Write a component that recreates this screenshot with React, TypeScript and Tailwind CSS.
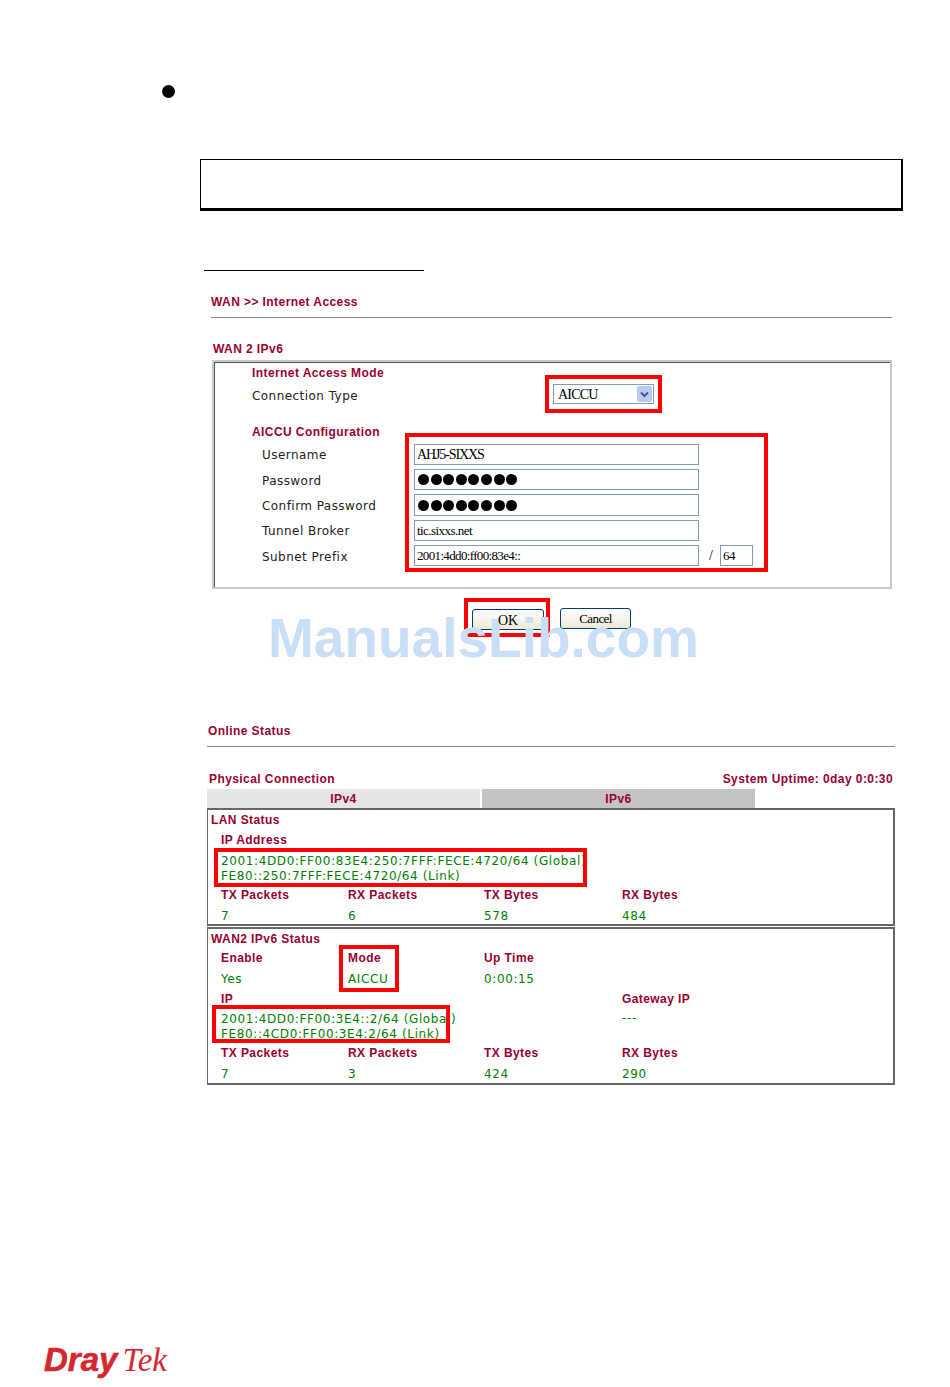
import type { ReactNode } from "react";

const sans = "font-['Liberation_Sans',Arial,sans-serif]";
const plain = "font-['DejaVu_Sans',Verdana,sans-serif]";
const serif = "font-['Liberation_Serif','Times_New_Roman',serif]";

function Heading({ children, className = "" }: { children: ReactNode; className?: string }) {
    return (
        <div className={`flex h-[14px] items-center whitespace-nowrap text-[12px] font-bold tracking-[0.42px] text-[#990033] ${sans} ${className}`}>
            {children}
        </div>
    );
}

function Label({ children, className = "" }: { children: ReactNode; className?: string }) {
    return (
        <div className={`flex h-[14px] items-center whitespace-nowrap pt-[2px] text-[12px] tracking-[0.45px] text-[#222] ${plain} ${className}`}>
            {children}
        </div>
    );
}

function Value({ children, className = "" }: { children: ReactNode; className?: string }) {
    return (
        <div className={`flex items-center whitespace-nowrap pt-[2px] text-[12px] tracking-[0.62px] text-[#008000] ${plain} ${className}`}>
            {children}
        </div>
    );
}

function Field({ children, className = "h-[21px] w-[285px]" }: { children: ReactNode; className?: string }) {
    return (
        <div className={`flex items-center border border-[#7f9db9] bg-white pl-[2px] text-[14px] text-black ${serif} ${className}`}>
            {children}
        </div>
    );
}

function Dots() {
    return (
        <div className="flex gap-[1.6px] pl-px">
            {[0, 1, 2, 3, 4, 5, 6, 7].map((i) => (
                <span key={i} className="h-[11px] w-[11px] rounded-full bg-black" />
            ))}
        </div>
    );
}

// red marker painted over its content, the text runs under it in the picture
function Marker({ children, className = "" }: { children: ReactNode; className?: string }) {
    return (
        <div className={`relative ${className}`}>
            {children}
            <div className="absolute inset-0 border-[4px] border-[#ff0000]" />
        </div>
    );
}

function Counters({ tx, rx, txBytes, rxBytes, first = "h-[16px]", second = "mt-[2px] h-[20px]" }: { tx: string; rx: string; txBytes: string; rxBytes: string; first?: string; second?: string }) {
    const cols = "grid grid-cols-[127px_136px_138px_1fr] pl-[13px]";
    return (
        <>
            <div className={cols}>
                <Heading className={first}>TX Packets</Heading>
                <Heading className={first}>RX Packets</Heading>
                <Heading className={first}>TX Bytes</Heading>
                <Heading className={first}>RX Bytes</Heading>
            </div>
            <div className={cols}>
                <Value className={second}>{tx}</Value>
                <Value className={second}>{rx}</Value>
                <Value className={second}>{txBytes}</Value>
                <Value className={second}>{rxBytes}</Value>
            </div>
        </>
    );
}

export default function App() {
    return (
        <div className={`relative flex h-[1387px] w-[950px] flex-col overflow-hidden bg-white ${sans}`}>
            {/* Bullet, note box and rule */}
            <div className="ml-[162px] mt-[85px] h-[13px] w-[13px] rounded-full bg-black" />
            <div className="ml-[200px] mt-[61px] h-[52px] w-[703px] border-b-[3px] border-l-[1.5px] border-r-[2px] border-t-[1.5px] border-black" />
            <div className="ml-[204px] mt-[59px] h-px w-[220px] bg-black" />

            {/* WAN form */}
            <Heading className="ml-[211px] mt-[24px]">WAN &gt;&gt; Internet Access</Heading>
            <div className="ml-[211px] mt-[8px] h-px w-[681px] bg-[#808080]" />
            <Heading className="ml-[213px] mt-[24px]">WAN 2 IPv6</Heading>

            <div className="ml-[212px] mt-[4px] h-[229px] w-[680px] border-2 border-[#c8c8c8]">
                <div className="flex h-full border-l border-t border-[#555]">
                    <div className="ml-[37px] w-[153px] shrink-0">
                        <Heading className="mt-[3px]">Internet Access Mode</Heading>
                        <Label className="mt-[8px]">Connection Type</Label>
                        <Heading className="mt-[23px]">AICCU Configuration</Heading>
                        <Label className="ml-[10px] mt-[8px]">Username</Label>
                        <Label className="ml-[10px] mt-[12px]">Password</Label>
                        <Label className="ml-[10px] mt-[11px]">Confirm Password</Label>
                        <Label className="ml-[10px] mt-[11px]">Tunnel Broker</Label>
                        <Label className="ml-[10px] mt-[12px]">Subnet Prefix</Label>
                    </div>
                    <div>
                        <div className="ml-[140px] mt-[12px] flex h-[38px] w-[117px] items-center border-[4px] border-[#ff0000] pl-[4px]">
                            <div className={`flex h-[20px] w-[101px] items-center justify-between border border-[#7f9db9] pl-[4px] pr-px text-[14px] tracking-[-0.8px] text-black ${serif}`}>
                                AICCU
                                <span className="flex h-[16px] w-[15px] items-center justify-center rounded-[2px] bg-[#b8cbf5]">
                                    <svg width="9" height="7" viewBox="0 0 9 7" fill="none">
                                        <path d="M1 1.5 L4.5 5 L8 1.5" stroke="#4d6185" strokeWidth="2.2" />
                                    </svg>
                                </span>
                            </div>
                        </div>
                        <div className="mt-[20px] flex h-[139px] w-[363px] flex-col gap-[4px] border-[4px] border-[#ff0000] pl-[5px] pt-[7px]">
                            <Field><span className="tracking-[-1.1px]">AHJ5-SIXXS</span></Field>
                            <Field><Dots /></Field>
                            <Field className="h-[22px] w-[285px]"><Dots /></Field>
                            <Field><span className="text-[13px] tracking-[-0.55px]">tic.sixxs.net</span></Field>
                            <div className="flex items-center">
                                <Field><span className="text-[13px] tracking-[-0.65px]">2001:4dd0:ff00:83e4::</span></Field>
                                <span className={`ml-[10px] w-[11px] text-[14px] text-black ${serif}`}>/</span>
                                <Field className="h-[21px] w-[33px]"><span className="text-[13px] tracking-[-0.6px]">64</span></Field>
                            </div>
                        </div>
                    </div>
                </div>
            </div>

            {/* Buttons */}
            <div className="ml-[464px] mt-[9px] flex h-[39px]">
                <div className="h-[39px] w-[86px] border-[4px] border-[#ff0000] pl-[4px] pt-[6px]">
                    <button className={`h-[21px] w-[72px] rounded-[3px] border border-[#003c74] bg-gradient-to-b from-white to-[#ece9d8] text-[14px] text-black ${serif}`}>
                        <span className="relative z-10">OK</span>
                    </button>
                </div>
                <button className={`ml-[10px] mt-[10px] h-[21px] w-[71px] rounded-[3px] border border-[#003c74] bg-gradient-to-b from-white to-[#ece9d8] text-[13px] tracking-[-0.6px] text-black ${serif}`}>
                    <span className="relative z-10">Cancel</span>
                </button>
            </div>

            {/* Online status */}
            <Heading className="ml-[208px] mt-[87px]">Online Status</Heading>
            <div className="ml-[207px] mt-[8px] h-px w-[688px] bg-[#808080]" />
            <div className="ml-[209px] mt-[25px] flex w-[684px] justify-between">
                <Heading>Physical Connection</Heading>
                <Heading>System Uptime: 0day 0:0:30</Heading>
            </div>
            <div className="ml-[207px] mt-[3px] flex gap-[2px]">
                <Heading className="!h-[19px] w-[273px] justify-center bg-[#e5e5e5]">IPv4</Heading>
                <Heading className="!h-[19px] w-[273px] justify-center bg-[#c4c4c4]">IPv6</Heading>
            </div>

            <div className="ml-[207px] h-[118px] w-[688px] border border-b-2 border-r-2 border-t-2 border-[#666]">
                <Heading className="ml-[3px] !h-[20px]">LAN Status</Heading>
                <Heading className="ml-[13px] !h-[18px] pt-[2px]">IP Address</Heading>
                <Marker className="ml-[6px] h-[39px] w-[373px] pl-[7px] pt-[4px]">
                    <Value className="h-[15px]">2001:4DD0:FF00:83E4:250:7FFF:FECE:4720/64 (Global)</Value>
                    <Value className="h-[15px]">FE80::250:7FFF:FECE:4720/64 (Link)</Value>
                </Marker>
                <Counters tx="7" rx="6" txBytes="578" rxBytes="484" />
            </div>

            <div className="ml-[207px] mt-px h-[158px] w-[688px] border border-b-2 border-r-2 border-t-2 border-[#666]">
                <Heading className="ml-[3px] mt-[4px] !h-[12px]">WAN2 IPv6 Status</Heading>
                <div className="grid h-[47px] grid-cols-[127px_136px_138px_1fr] pl-[13px]">
                    <div className="pt-[3px]">
                        <Heading className="!h-[20px]">Enable</Heading>
                        <Value className="h-[20px]">Yes</Value>
                    </div>
                    <div className="-ml-[9px] h-[47px] w-[60px] border-[4px] border-[#ff0000] pl-[5px]">
                        <Heading className="-mt-px !h-[20px]">Mode</Heading>
                        <Value className="h-[20px]">AICCU</Value>
                    </div>
                    <div className="pt-[3px]">
                        <Heading className="!h-[20px]">Up Time</Heading>
                        <Value className="h-[20px]">0:00:15</Value>
                    </div>
                </div>
                <div className="flex">
                    <div className="w-[414px] shrink-0">
                        <Heading className="ml-[13px] !h-[13px]">IP</Heading>
                        <Marker className="ml-[4px] h-[38px] w-[238px] pl-[9px] pt-[5px]">
                            <Value className="h-[15px]">2001:4DD0:FF00:3E4::2/64 (Global)</Value>
                            <Value className="h-[15px]">FE80::4CD0:FF00:3E4:2/64 (Link)</Value>
                        </Marker>
                    </div>
                    <div>
                        <Heading className="!h-[13px]">Gateway IP</Heading>
                        <Value className="mt-[4px] h-[15px]">---</Value>
                    </div>
                </div>
                <Counters tx="7" rx="3" txBytes="424" rxBytes="290" first="!h-[20px]" second="h-[20px]" />
            </div>

            {/* Logo */}
            <div className="ml-[44px] mt-[255px] flex items-baseline whitespace-nowrap italic leading-[40px] text-[#d4272e]">
                <span className={`text-[33px] font-bold [-webkit-text-stroke:0.6px_#d4272e] ${sans}`}>Dray</span>
                <span className={`ml-[5px] text-[33px] ${serif}`}>Tek</span>
            </div>

            {/* Watermark */}
            <div className={`absolute left-[268px] top-[606px] whitespace-nowrap text-[55px] font-bold leading-[64px] text-[#c9dff8] ${sans}`}>
                ManualsLib.com
            </div>
        </div>
    );
}
